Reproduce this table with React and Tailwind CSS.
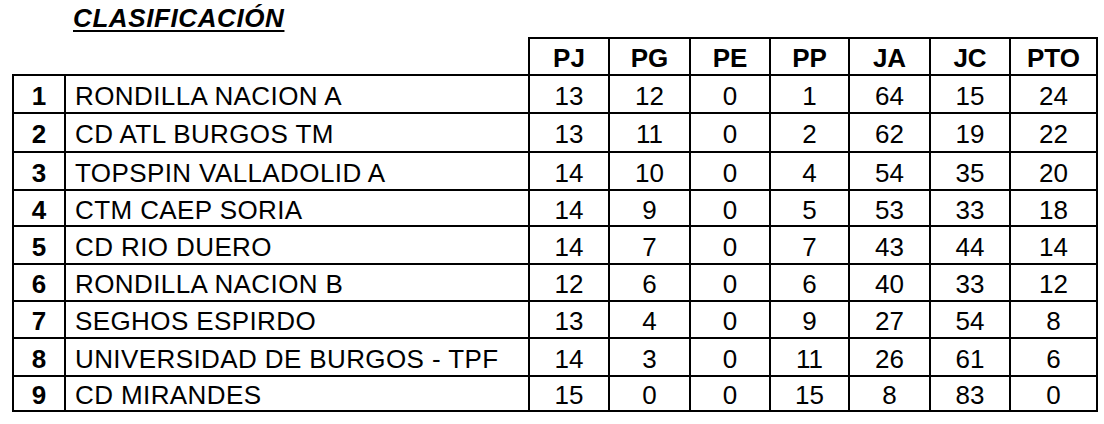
import React from "react";

const rows = [
  [1, "RONDILLA NACION A", 13, 12, 0, 1, 64, 15, 24],
  [2, "CD ATL BURGOS TM", 13, 11, 0, 2, 62, 19, 22],
  [3, "TOPSPIN VALLADOLID A", 14, 10, 0, 4, 54, 35, 20],
  [4, "CTM CAEP SORIA", 14, 9, 0, 5, 53, 33, 18],
  [5, "CD RIO DUERO", 14, 7, 0, 7, 43, 44, 14],
  [6, "RONDILLA NACION B", 12, 6, 0, 6, 40, 33, 12],
  [7, "SEGHOS ESPIRDO", 13, 4, 0, 9, 27, 54, 8],
  [8, "UNIVERSIDAD DE BURGOS - TPF", 14, 3, 0, 11, 26, 61, 6],
  [9, "CD MIRANDES", 15, 0, 0, 15, 8, 83, 0],
];

const heights = [38, 39, 38, 36, 38, 37, 37, 38, 35];
const heads = ["PJ", "PG", "PE", "PP", "JA", "JC", "PTO"];

export default function App() {
  return (
    <div className="w-[1104px] h-[424px] bg-white text-black overflow-hidden" style={{ fontFamily: '"Liberation Sans", Arial, sans-serif' }}>
      <div className="h-[37px] pl-[73px] pt-[3px]">
        <span className="text-[26px] leading-[30px] font-bold italic underline underline-offset-[3px] decoration-2 tracking-[0.6px]">CLASIFICACIÓN</span>
      </div>
      <table className="ml-[12px] w-[1084px] table-fixed border-collapse">
        <colgroup>
          <col className="w-[52px]" />
          <col className="w-[464px]" />
          <col className="w-[80px]" />
          <col className="w-[81px]" />
          <col className="w-[80px]" />
          <col className="w-[79px]" />
          <col className="w-[81px]" />
          <col className="w-[80px]" />
          <col className="w-[87px]" />
        </colgroup>
        <thead>
          <tr className="h-[37px]">
            <th className="p-0"></th>
            <th className="p-0"></th>
            {heads.map((h) => (
              <th key={h} className="border-2 border-black p-0 pt-[3px] text-center align-middle text-[26px] font-bold leading-none">
                {h}
              </th>
            ))}
          </tr>
        </thead>
        <tbody>
          {rows.map((r, i) => (
            <tr key={r[0]} style={{ height: heights[i] }}>
              <td className="border-2 border-black p-0 pt-[3px] text-center align-middle text-[26px] font-bold leading-none">{r[0]}</td>
              <td className="border-2 border-black p-0 pt-[3px] pl-[9px] text-left align-middle text-[26px] leading-none tracking-[0.4px] whitespace-nowrap">{r[1]}</td>
              {r.slice(2).map((v, j) => (
                <td key={j} className="border-2 border-black p-0 pt-[3px] text-center align-middle text-[26px] leading-none">{v}</td>
              ))}
            </tr>
          ))}
        </tbody>
      </table>
    </div>
  );
}
